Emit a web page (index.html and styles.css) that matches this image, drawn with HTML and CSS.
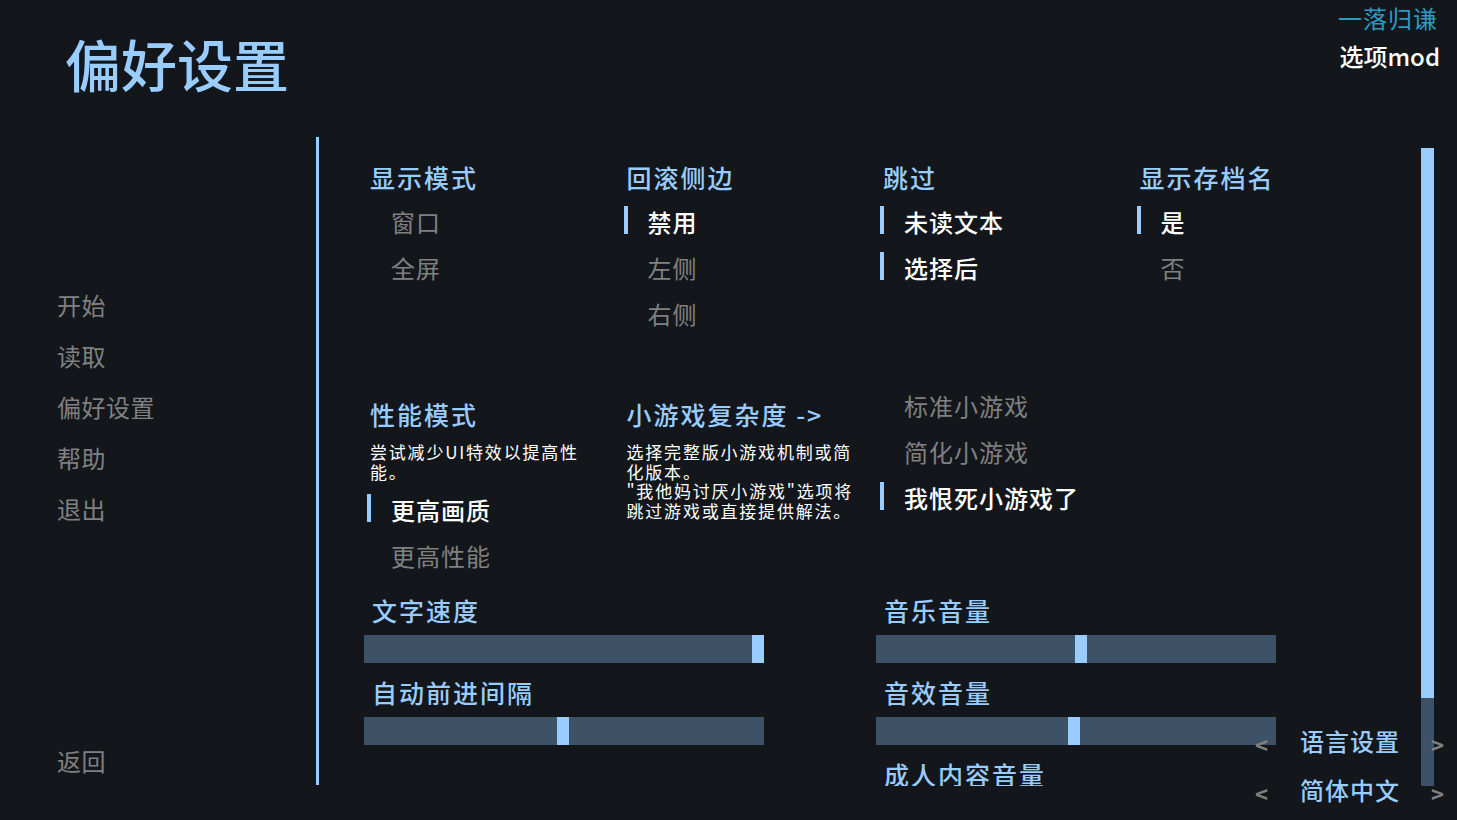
FILE: index.html
```html
<!DOCTYPE html>
<html lang="zh-CN">
<head>
<meta charset="utf-8">
<title>偏好设置</title>
<link rel="stylesheet" href="styles.css">
</head>
<body>
<div class="screen">
  <header class="header">
    <h1 class="title">偏好设置</h1>
    <div class="brand">
      <div class="brand-a">一落归谦</div>
      <div class="brand-b">选项mod</div>
    </div>
  </header>
  <div class="main">
    <nav class="nav">
      <div class="nav-item">开始</div>
      <div class="nav-item">读取</div>
      <div class="nav-item">偏好设置</div>
      <div class="nav-item">帮助</div>
      <div class="nav-item">退出</div>
      <div class="nav-item nav-back">返回</div>
    </nav>
    <div class="divider"></div>
    <div class="viewport">
      <div class="row row-1">
        <div class="col">
          <div class="label">显示模式</div>
          <div class="opt"><span class="mark"></span><span>窗口</span></div>
          <div class="opt"><span class="mark"></span><span>全屏</span></div>
        </div>
        <div class="col">
          <div class="label">回滚侧边</div>
          <div class="opt sel"><span class="mark"></span><span>禁用</span></div>
          <div class="opt"><span class="mark"></span><span>左侧</span></div>
          <div class="opt"><span class="mark"></span><span>右侧</span></div>
        </div>
        <div class="col">
          <div class="label">跳过</div>
          <div class="opt sel"><span class="mark"></span><span>未读文本</span></div>
          <div class="opt sel"><span class="mark"></span><span>选择后</span></div>
        </div>
        <div class="col">
          <div class="label">显示存档名</div>
          <div class="opt sel"><span class="mark"></span><span>是</span></div>
          <div class="opt"><span class="mark"></span><span>否</span></div>
        </div>
      </div>
      <div class="row row-2">
        <div class="col">
          <div class="label">性能模式</div>
          <div class="desc">尝试减少UI特效以提高性<br>能。</div>
          <div class="opt sel"><span class="mark"></span><span>更高画质</span></div>
          <div class="opt"><span class="mark"></span><span>更高性能</span></div>
        </div>
        <div class="col">
          <div class="label">小游戏复杂度 -&gt;</div>
          <div class="desc">选择完整版小游戏机制或简<br>化版本。<br>"我他妈讨厌小游戏"选项将<br>跳过游戏或直接提供解法。</div>
        </div>
        <div class="col">
          <div class="opt"><span class="mark"></span><span>标准小游戏</span></div>
          <div class="opt"><span class="mark"></span><span>简化小游戏</span></div>
          <div class="opt sel"><span class="mark"></span><span>我恨死小游戏了</span></div>
        </div>
        <div class="col"></div>
      </div>
      <div class="sliders">
        <div class="slider-col">
          <div class="slider">
            <div class="label">文字速度</div>
            <div class="bar"><div class="bar-fill" style="width:388px"></div><div class="bar-thumb"></div></div>
          </div>
          <div class="slider">
            <div class="label">自动前进间隔</div>
            <div class="bar"><div class="bar-fill" style="width:193px"></div><div class="bar-thumb"></div></div>
          </div>
        </div>
        <div class="slider-col">
          <div class="slider">
            <div class="label">音乐音量</div>
            <div class="bar"><div class="bar-fill" style="width:199px"></div><div class="bar-thumb"></div></div>
          </div>
          <div class="slider">
            <div class="label">音效音量</div>
            <div class="bar"><div class="bar-fill" style="width:192px"></div><div class="bar-thumb"></div></div>
          </div>
          <div class="slider">
            <div class="label">成人内容音量</div>
            <div class="bar"><div class="bar-fill" style="width:194px"></div><div class="bar-thumb"></div></div>
          </div>
        </div>
      </div>
    </div>
    <div class="scrollbar"><div class="sb-thumb"></div><div class="sb-track"></div></div>
  </div>
  <div class="lang">
    <div class="lang-row"><span class="arrow">&lt;</span><span class="lang-text">语言设置</span><span class="arrow">&gt;</span></div>
    <div class="lang-row"><span class="arrow">&lt;</span><span class="lang-text">简体中文</span><span class="arrow">&gt;</span></div>
  </div>
</div>
</body>
</html>
```
FILE: styles.css
```css
body {
  margin: 0;
  background: #13171b;
  font-family: "Noto Sans CJK SC", "Noto Sans", sans-serif;
}
.screen {
  width: 1457px;
  height: 820px;
  overflow: hidden;
  position: relative;
  display: flex;
  flex-direction: column;
}
.header {
  height: 137px;
  flex-shrink: 0;
  display: flex;
  justify-content: space-between;
  align-items: flex-start;
}
.title {
  margin: 25px 0 0 65px;
  font-size: 56px;
  line-height: 76px;
  font-weight: 500;
  color: #99ccff;
}
.brand {
  margin: 2px 17px 0 0;
  display: flex;
  flex-direction: column;
  align-items: flex-end;
}
.brand-a {
  font-size: 24px;
  line-height: 32px;
  color: #2b9ac4;
  letter-spacing: 1px;
  margin-right: 2px;
}
.brand-b {
  font-size: 24px;
  line-height: 36px;
  color: #ffffff;
  font-weight: 500;
  margin-top: 4px;
}
.main {
  display: flex;
  height: 649px;
  flex-shrink: 0;
}
.nav {
  width: 316px;
  flex-shrink: 0;
  box-sizing: border-box;
  padding: 142px 0 0 57px;
  display: flex;
  flex-direction: column;
}
.nav-item {
  font-size: 24px;
  line-height: 51px;
  color: #808080;
  letter-spacing: 0.5px;
}
.nav-back {
  margin-top: auto;
}
.divider {
  width: 3px;
  height: 648px;
  background: #99ccff;
  flex-shrink: 0;
}
.viewport {
  flex: 1;
  overflow: hidden;
  padding-left: 51px;
}
.scrollbar {
  width: 13px;
  margin: 11px 23px 0 0;
  flex-shrink: 0;
  display: flex;
  flex-direction: column;
}
.sb-thumb {
  height: 550px;
  background: #99ccff;
}
.sb-track {
  flex: 1;
  background: #3d5266;
}
.row {
  display: grid;
  grid-template-columns: repeat(4, 256.5px);
  align-items: start;
}
.row-1 {
  padding-top: 20px;
}
.row-2 {
  margin-top: 46px;
}
.col {
  display: flex;
  flex-direction: column;
}
.label {
  font-size: 25px;
  line-height: 40px;
  color: #99ccff;
  letter-spacing: 2px;
  font-weight: 500;
  white-space: nowrap;
}
.row-1 .label {
  margin-bottom: 2px;
}
.row-2 .label {
  margin-top: 11px;
}
.desc {
  margin-top: 8px;
  font-size: 17px;
  line-height: 19.7px;
  color: #ffffff;
  letter-spacing: 1.8px;
  white-space: nowrap;
}
.desc + .opt {
  margin-top: 6px;
}
.opt {
  display: flex;
  align-items: flex-start;
  height: 46px;
  line-height: 46px;
  font-size: 24px;
  color: #808080;
  letter-spacing: 1px;
  white-space: nowrap;
}
.mark {
  width: 4px;
  height: 28px;
  margin: 7px 20px 0 -3px;
  background: #99ccff;
  visibility: hidden;
  flex-shrink: 0;
}
.opt.sel {
  color: #ffffff;
  font-weight: 500;
}
.opt.sel .mark {
  visibility: visible;
}
.sliders {
  display: grid;
  grid-template-columns: 512px 512px;
  margin: 11px 0 0 -6px;
}
.slider-col {
  display: flex;
  flex-direction: column;
  gap: 9px;
}
.slider {
  display: flex;
  flex-direction: column;
}
.slider .label {
  padding-left: 8px;
}
.bar {
  margin-top: 5px;
  width: 400px;
  height: 28px;
  background: #3d5266;
  display: flex;
}
.bar-fill {
  height: 100%;
}
.bar-thumb {
  width: 12px;
  height: 100%;
  background: #99ccff;
}
.lang {
  position: absolute;
  left: 1255px;
  top: 716px;
  display: flex;
  flex-direction: column;
}
.lang-row {
  display: flex;
  align-items: center;
  height: 49px;
}
.arrow {
  width: 45px;
  font-size: 22px;
  font-weight: 700;
  color: #808080;
  padding-top: 6px;
}
.lang-text {
  width: 131px;
  font-size: 24px;
  color: #99ccff;
  letter-spacing: 1px;
  font-weight: 500;
}
```
